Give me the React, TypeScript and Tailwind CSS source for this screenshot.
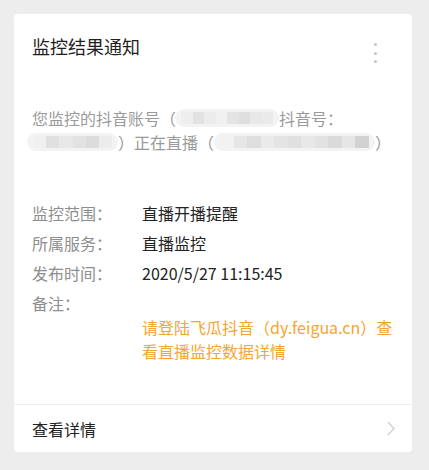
import React from 'react';

const font = { fontFamily: '"Noto Sans CJK SC", "Noto Sans", sans-serif' };

// pixelated mask standing in for a hidden account name
const Masked: React.FC<{ width: number; shades: string[]; className?: string }> = ({ width, shades, className }) => (
  <span
    className={`flex h-[18px] shrink-0 items-stretch overflow-hidden rounded-full bg-[#f3f3f3] px-[6px] py-[3px] ${className ?? ''}`}
    style={{ width }}
  >
    {shades.map((s, i) => (
      <span key={i} className="flex-1" style={{ backgroundColor: s }} />
    ))}
  </span>
);

const rows = [
  { label: '监控范围：', value: '直播开播提醒' },
  { label: '所属服务：', value: '直播监控' },
  { label: '发布时间：', value: '2020/5/27 11:15:45' },
  { label: '备注：', value: '' },
];

export default function App() {
  return (
    <div className="min-h-[470px] bg-[#ededed] pt-[14px]" style={font}>
      <div className="ml-[14px] w-[398px] overflow-hidden rounded-[4px] bg-white">
        <div className="pl-[18px] pr-[18px] pt-5 pb-[41px]">
          {/* header */}
          <div className="flex h-6 items-start justify-between">
            <div className="text-[18px] leading-[24px] text-[#1f1f1f]">监控结果通知</div>
            <div className="mr-[17px] mt-[9px] flex flex-col gap-[5.5px]">
              <span className="h-[3px] w-[3px] rounded-full bg-[#c6c6c6]" />
              <span className="h-[3px] w-[3px] rounded-full bg-[#c6c6c6]" />
              <span className="h-[3px] w-[3px] rounded-full bg-[#c6c6c6]" />
            </div>
          </div>

          {/* body */}
          <div className="mt-12 text-[16px] text-[#9a9a9a]">
            <div className="flex h-6 items-center whitespace-nowrap">
              <span>您监控的抖音账号（</span>
              <Masked
                width={104}
                className="-ml-[1px]"
                shades={['#eeeeee', '#e2e2e2', '#ececec', '#f0f0f0', '#e4e4e4', '#dedede', '#e8e8e8', '#eaeaea']}
              />
              <span>抖音号：</span>
            </div>
            <div className="-ml-[5px] flex h-6 items-center whitespace-nowrap">
              <Masked width={91} shades={['#f0f0f0', '#e0e0e0', '#e8e8e8', '#e2e2e2', '#dcdcdc', '#ececec']} />
              <span>）正在直播（</span>
              <Masked
                width={161}
                shades={['#f2f2f2', '#e6e6e6', '#dedede', '#eaeaea', '#e4e4e4', '#e0e0e0', '#e8e8e8', '#e2e2e2', '#dadada', '#e6e6e6', '#d2d2d2']}
              />
              <span>）</span>
            </div>
          </div>

          {/* details */}
          <div className="mt-11 text-[16px]">
            {rows.map((r) => (
              <div key={r.label} className="flex h-[30px] items-center">
                <span className="w-[110px] text-[#8e8e8e]">{r.label}</span>
                <span className="text-[#222222]">{r.value}</span>
              </div>
            ))}
            <div className="-mt-[3px] pl-[110px] text-[16px] leading-[24px] text-[#f5a532]">
              请登陆飞瓜抖音（dy.feigua.cn）查看直播监控数据详情
            </div>
          </div>
        </div>

        {/* footer */}
        <div className="flex h-12 items-center justify-between border-t border-[#eeeeee] pl-[18px] pr-[17px]">
          <span className="text-[16px] text-[#222222]">查看详情</span>
          <svg width="8" height="15" viewBox="0 0 8 15" fill="none">
            <polyline points="1,1 7,7.5 1,14" stroke="#cfcfcf" strokeWidth="1.3" />
          </svg>
        </div>
      </div>
    </div>
  );
}
